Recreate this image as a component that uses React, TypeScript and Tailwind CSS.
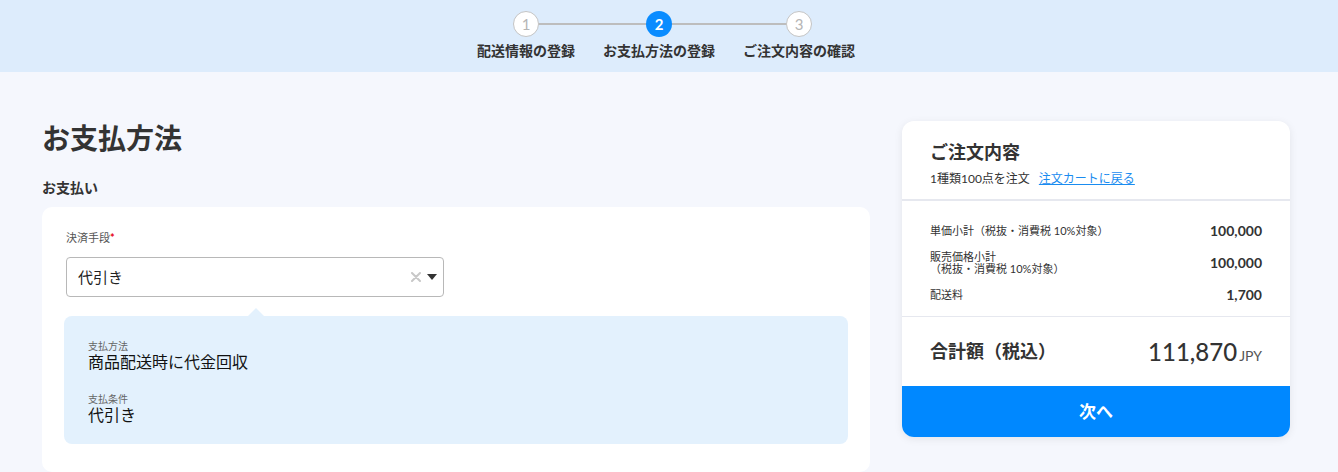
const font = { fontFamily: '"Lato", "Noto Sans CJK JP", sans-serif' };

const steps = [
  { n: 1, label: "配送情報の登録", active: false },
  { n: 2, label: "お支払方法の登録", active: true },
  { n: 3, label: "ご注文内容の確認", active: false },
];

function Stepper() {
  return (
    <div className="flex justify-center gap-7 pt-[11px] pr-[6px]">
      {steps.map((s, i) => (
        <div key={s.n} className="relative flex flex-col items-center">
          {i > 0 && <div className="absolute left-[-14px] right-1/2 top-[12px] h-[2px] bg-[#bdbdbd]" />}
          {i < steps.length - 1 && <div className="absolute left-1/2 right-[-14px] top-[12px] h-[2px] bg-[#bdbdbd]" />}
          <div
            className={
              s.active
                ? "relative z-10 flex h-[26px] w-[26px] items-center justify-center rounded-full bg-[#0a8cff] text-[15px] font-bold text-white"
                : "relative z-10 flex h-[26px] w-[26px] items-center justify-center rounded-full border border-[#c4c4c4] bg-white text-[15px] text-[#b5b5b5]"
            }
          >
            {s.n}
          </div>
          <div className="mt-[4px] text-[14px] font-bold leading-[20px] text-[#333]">{s.label}</div>
        </div>
      ))}
    </div>
  );
}

function PaymentForm() {
  return (
    <div className="w-[828px] shrink-0">
      <h1 className="mt-[-1px] text-[28px] font-bold leading-[36px] text-[#333]">お支払方法</h1>
      <h2 className="mt-[22px] text-[14px] font-bold leading-[20px] text-[#333]">お支払い</h2>
      <div className="mt-[9px] rounded-[10px] bg-white px-[22px] pt-[23px] pb-[28px]">
        <div className="ml-[2px] text-[11px] leading-[16px] text-[#555]">
          決済手段<span className="font-bold text-[#e60012]">*</span>
        </div>
        <div className="ml-[2px] mt-[11px] flex h-[40px] w-[378px] items-center justify-between rounded-[4px] border border-[#b8b8b8] bg-white pl-[11px] pr-[6px]">
          <span className="text-[15px] text-[#222]">代引き</span>
          <div className="flex items-center gap-[6px]">
            <svg width="10" height="10" viewBox="0 0 10 10">
              <path d="M1 1 L9 9 M9 1 L1 9" stroke="#c8c8c8" strokeWidth="2" strokeLinecap="round" />
            </svg>
            <svg width="10" height="7" viewBox="0 0 10 7">
              <path d="M0 0 L10 0 L5 6 Z" fill="#333" />
            </svg>
          </div>
        </div>
        <div className="relative mt-[19px] rounded-[8px] bg-[#e3f1fd] px-[24px] pt-[24px] pb-[19px]">
          <div className="absolute left-[184px] top-[-8px] h-0 w-0 border-x-[8px] border-b-[8px] border-x-transparent border-b-[#e3f1fd]" />
          <div className="text-[10px] leading-[12px] text-[#666]">支払方法</div>
          <div className="text-[16px] leading-[20px] text-[#111]">商品配送時に代金回収</div>
          <div className="mt-[21px] text-[10px] leading-[12px] text-[#666]">支払条件</div>
          <div className="text-[16px] leading-[20px] text-[#111]">代引き</div>
        </div>
      </div>
    </div>
  );
}

function Row({ label, value }: { label: React.ReactNode; value: string }) {
  return (
    <div className="flex items-center justify-between">
      <div className="text-[11px] leading-[12px] text-[#333]">{label}</div>
      <div className="text-[14px] font-bold leading-[18px] text-[#333]">{value}</div>
    </div>
  );
}

function OrderSummary() {
  return (
    <div className="w-[388px] shrink-0 self-start overflow-hidden rounded-[12px] bg-white shadow-[0_2px_8px_rgba(0,0,0,0.08)]">
      <div className="px-[28px] pt-[19px] pb-[12px]">
        <div className="text-[18px] font-bold leading-[24px] text-[#333]">ご注文内容</div>
        <div className="mt-[7px] flex items-center gap-[9px] text-[12px] leading-[16px]">
          <span className="text-[#333]">1種類100点を注文</span>
          <a className="text-[#1a8cf0] underline">注文カートに戻る</a>
        </div>
      </div>
      <div className="h-[2px] bg-[#e6e8ef]" />
      <div className="flex flex-col gap-[11px] px-[28px] pt-[21px] pb-[12px]">
        <Row label="単価小計（税抜・消費税 10%対象）" value="100,000" />
        <Row
          label={
            <>
              販売価格小計
              <br />
              （税抜・消費税 10%対象）
            </>
          }
          value="100,000"
        />
        <Row label="配送料" value="1,700" />
      </div>
      <div className="h-px bg-[#e6e8ef]" />
      <div className="flex h-[69px] items-center justify-between px-[28px]">
        <div className="text-[18px] font-bold text-[#333]">合計額（税込）</div>
        <div className="flex items-baseline">
          <span className="text-[24px] font-medium text-[#333]">111,870</span>
          <span className="ml-[2px] text-[14px] text-[#555]">JPY</span>
        </div>
      </div>
      <button className="flex h-[51px] w-full items-center justify-center bg-[#0088ff] text-[17px] font-bold text-white">
        次へ
      </button>
    </div>
  );
}

export default function App() {
  return (
    <div className="min-h-[472px] bg-[#f5f7fd]" style={font}>
      <div className="h-[72px] bg-[#ddecfc]">
        <Stepper />
      </div>
      <div className="flex gap-8 pl-[42px] pr-[48px] pt-[49px]">
        <PaymentForm />
        <OrderSummary />
      </div>
    </div>
  );
}
